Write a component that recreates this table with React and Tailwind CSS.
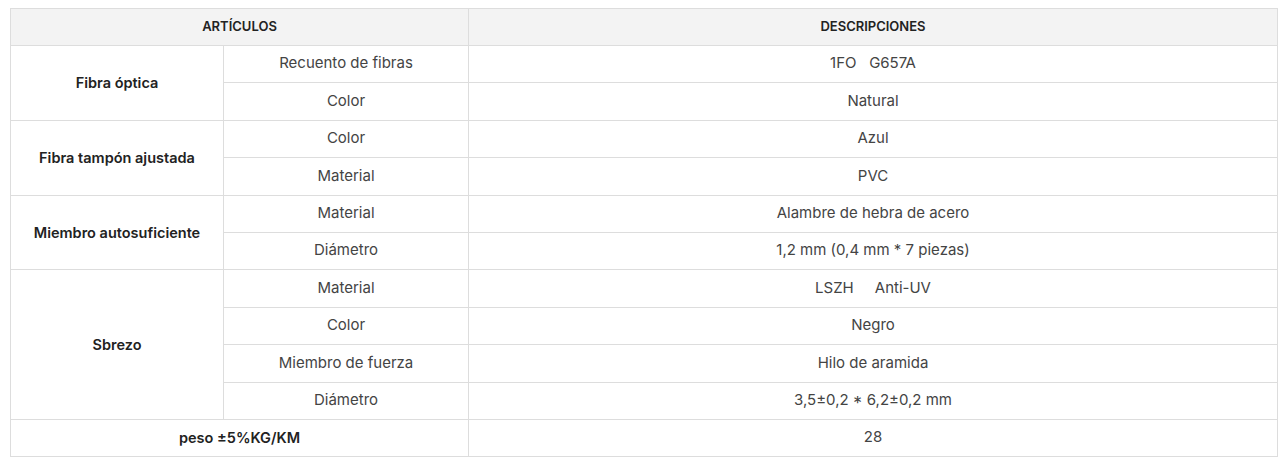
const GROUPS = [
  {
    name: 'Fibra óptica',
    rows: [
      ['Recuento de fibras', '1FO\u00a0\u00a0\u00a0G657A'],
      ['Color', 'Natural'],
    ],
  },
  {
    name: 'Fibra tampón ajustada',
    rows: [
      ['Color', 'Azul'],
      ['Material', 'PVC'],
    ],
  },
  {
    name: 'Miembro autosuficiente',
    rows: [
      ['Material', 'Alambre de hebra de acero'],
      ['Diámetro', '1,2 mm (0,4 mm * 7 piezas)'],
    ],
  },
  {
    name: 'Sbrezo',
    rows: [
      ['Material', 'LSZH\u00a0\u00a0\u00a0\u00a0\u00a0Anti-UV'],
      ['Color', 'Negro'],
      ['Miembro de fuerza', 'Hilo de aramida'],
      ['Diámetro', '3,5±0,2 * 6,2±0,2 mm'],
    ],
  },
];

const cell = 'border border-[#dddddd] text-center align-middle px-2';
const bold = 'font-semibold text-[14.5px] text-[#222222]';

export default function App() {
  return (
    <div className="pt-[8px] pl-[10px] bg-white min-h-[463px]" style={{ fontFamily: 'Inter, "Noto Sans", sans-serif' }}>
      <table className="w-[1268px] table-fixed border-collapse text-[15px] text-[#444444]">
        <colgroup>
          <col className="w-[213px]" />
          <col className="w-[245px]" />
          <col />
        </colgroup>
        <thead>
          <tr className="h-[37px] bg-[#f3f3f3]">
            <th colSpan={2} className={`${cell} font-semibold text-[13px] text-[#222222]`}>ARTÍCULOS</th>
            <th className={`${cell} font-semibold text-[13px] text-[#222222]`}>DESCRIPCIONES</th>
          </tr>
        </thead>
        <tbody>
          {GROUPS.map((group) =>
            group.rows.map(([label, value], i) => (
              <tr key={group.name + i} className="h-[37.4px]">
                {i === 0 && (
                  <td rowSpan={group.rows.length} className={`${cell} ${bold}`}>
                    {group.name}
                  </td>
                )}
                <td className={`${cell} pb-[1px]`}>{label}</td>
                <td className={`${cell} pb-[1px]`}>{value}</td>
              </tr>
            ))
          )}
          <tr className="h-[37.4px]">
            <td colSpan={2} className={`${cell} ${bold}`}>peso ±5%KG/KM</td>
            <td className={`${cell} pb-[1px]`}>28</td>
          </tr>
        </tbody>
      </table>
    </div>
  );
}
